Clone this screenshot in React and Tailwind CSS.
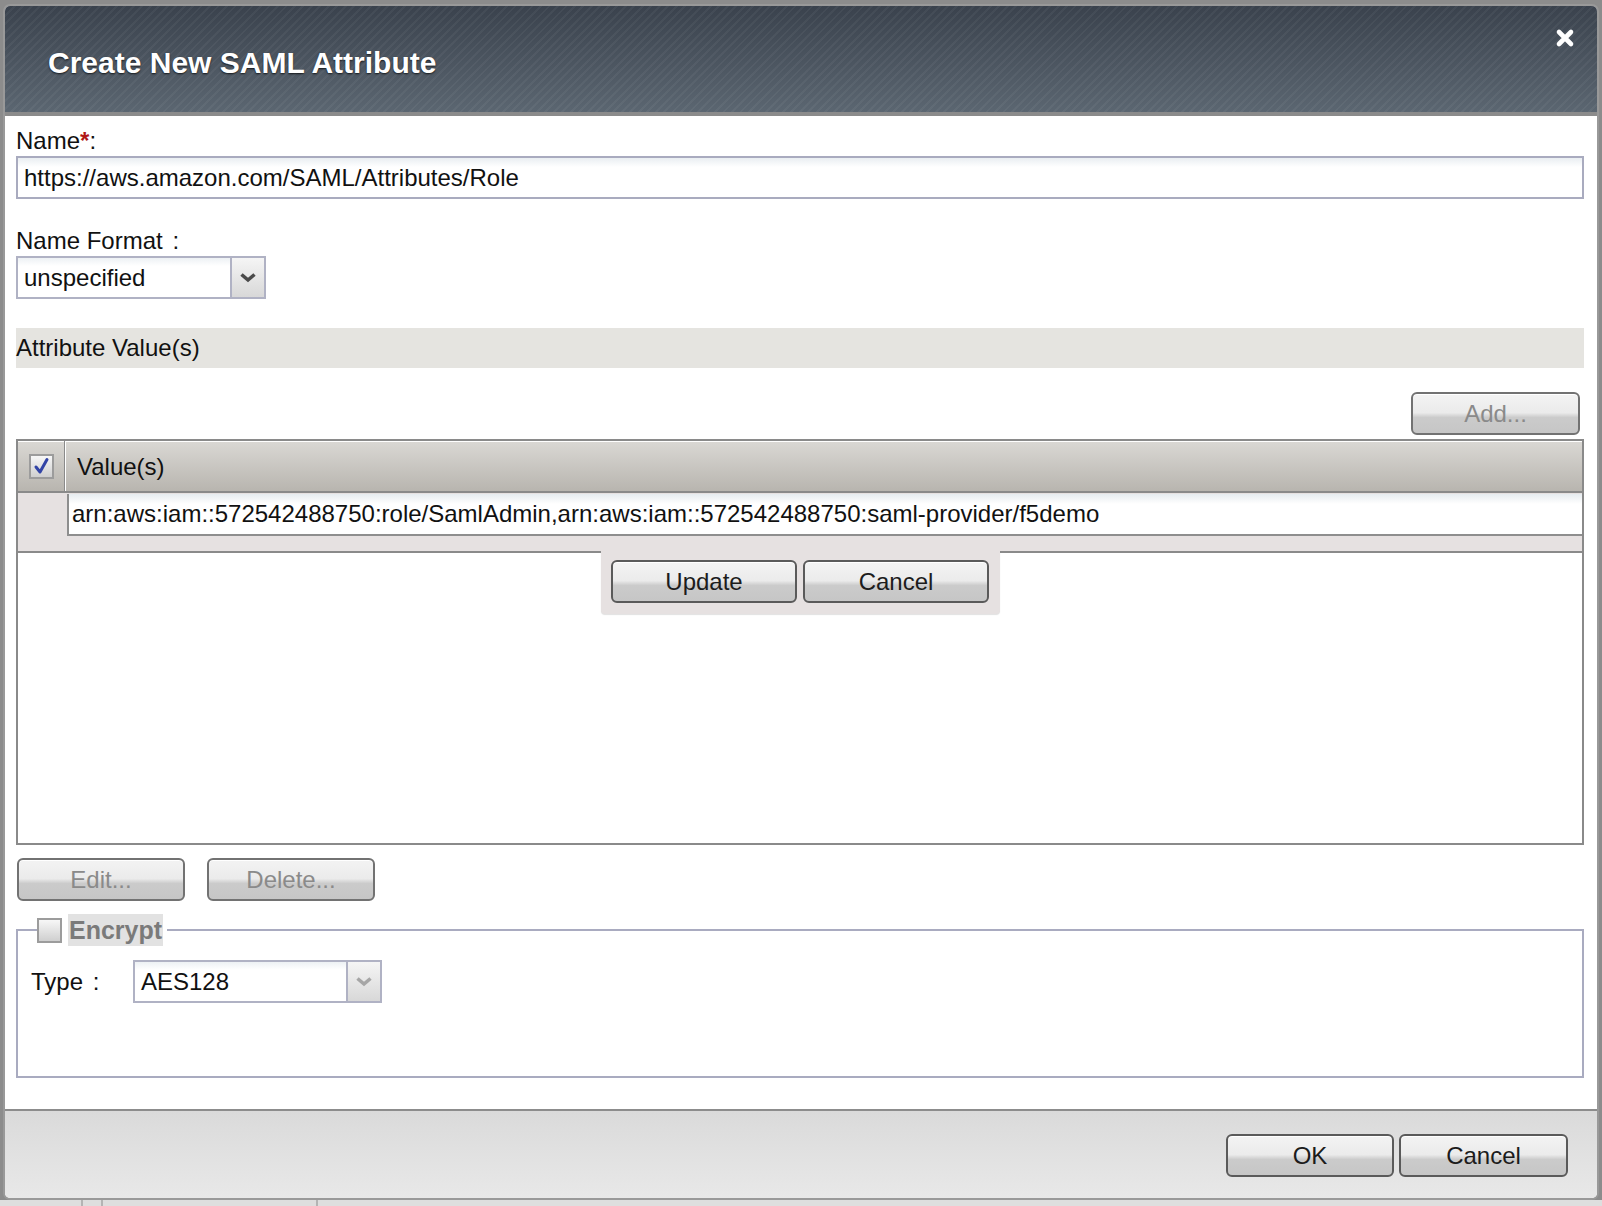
import clsx from "clsx";

const btnBase =
  "h-[43px] rounded-[6px] border-2 text-[24px] leading-none shadow-[inset_0_1px_0_#ffffff] bg-[linear-gradient(to_bottom,#f3f3f3_0%,#ebebeb_48%,#cbcbcb_60%,#c6c6c6_100%)]";

function Button({ children, disabled, className }) {
  return (
    <button
      type="button"
      className={clsx(
        btnBase,
        disabled ? "border-[#727272] text-[#8a8a8a]" : "border-[#5a5a5a] text-[#1c1c1c]",
        className
      )}
    >
      {children}
    </button>
  );
}

function Chevron({ color }) {
  return (
    <svg width="18" height="11" viewBox="0 0 18 11">
      <polyline points="2.5,2.5 9,8 15.5,2.5" fill="none" stroke={color} strokeWidth="3.6" strokeLinejoin="miter" />
    </svg>
  );
}

function Select({ value, muted, className }) {
  return (
    <div className={clsx("flex h-[43px] border-2 border-[#b0b2c4] bg-white", className)}>
      <div className="flex flex-1 items-center pl-[6px] text-[24px] text-[#111] bg-[linear-gradient(to_bottom,#edf1f4_0px,#ffffff_8px)]">
        {value}
      </div>
      <div className="flex w-[34px] items-center justify-center border-l-2 border-[#b0b2c4] bg-[linear-gradient(to_bottom,#f5f5f5,#d8d8d8)]">
        <Chevron color={muted ? "#a6a6a6" : "#4a4a4a"} />
      </div>
    </div>
  );
}

function CheckBox({ checked }) {
  return (
    <div className="flex h-[25px] w-[25px] items-center justify-center border-2 border-[#9c9c9c] bg-[linear-gradient(to_bottom,#f7f7f7,#cfcfcf)]">
      {checked && (
        <svg width="19" height="19" viewBox="0 0 19 19">
          <path d="M4 10 L8 15 L15 2.5" fill="none" stroke="#3244a6" strokeWidth="3" strokeLinecap="round" strokeLinejoin="round" />
        </svg>
      )}
    </div>
  );
}

export default function App() {
  return (
    <div className="relative h-[1206px] w-[1602px] overflow-hidden bg-[#8c8c8c] font-['Liberation_Sans',Arial,sans-serif]">
      <div className="ml-[3px] mt-[4px] flex h-[1196px] w-[1596px] flex-col overflow-hidden rounded-[7px] border-2 border-[#999999] bg-white">
        {/* title bar */}
        <div className="relative flex h-[110px] shrink-0 items-center border-b-4 border-[#8b8b8b] pl-[43px] pt-[6px] bg-[repeating-linear-gradient(135deg,rgba(255,255,255,0.045)_0px,rgba(255,255,255,0.045)_2px,transparent_2px,transparent_6px),linear-gradient(to_bottom,#3a424d,#5b6671)]">
          <h1 className="text-[30px] font-bold text-white [text-shadow:0_1px_2px_rgba(0,0,0,0.75)]">
            Create New SAML Attribute
          </h1>
          <button type="button" className="absolute right-[22px] top-[22px]">
            <svg width="20" height="20" viewBox="0 0 20 20">
              <path d="M4 4 L16 16 M16 4 L4 16" stroke="#ffffff" strokeWidth="4.6" strokeLinecap="round" />
            </svg>
          </button>
        </div>

        {/* form body */}
        <div className="flex flex-1 flex-col pl-[11px] pr-[13px] pt-[11px] text-[24px] text-[#111]">
          <label className="leading-[28px]">
            Name<span className="font-bold text-[#b01818]">*</span>:
          </label>
          <div className="mt-[1px] flex h-[43px] items-center border-2 border-[#a9abbf] pl-[6px] bg-[linear-gradient(to_bottom,#e9eef2_0px,#ffffff_9px)]">
            https://aws.amazon.com/SAML/Attributes/Role
          </div>

          <label className="mt-[28px] leading-[28px]">
            Name Format <span className="ml-[3px]">:</span>
          </label>
          <Select value="unspecified" className="mt-[1px] w-[250px]" />

          <div className="mt-[29px] h-[40px] bg-[#e5e4e0] leading-[40px]">Attribute Value(s)</div>

          <div className="mt-[24px] flex justify-end pr-[4px]">
            <Button disabled className="w-[169px]">
              Add...
            </Button>
          </div>

          {/* values table */}
          <div className="mt-[4px] flex h-[406px] flex-col border-2 border-[#8a8a8a]">
            <div className="flex h-[52px] shrink-0 border-b-2 border-[#8a8a8a] shadow-[inset_0_1px_0_#ffffff] bg-[linear-gradient(to_bottom,#dad8d4,#b8b5af)]">
              <div className="flex w-[47px] items-center justify-center border-r border-[#8a8a8a]">
                <CheckBox checked />
              </div>
              <div className="flex flex-1 items-center border-l border-white pl-[11px] pt-[2px]">Value(s)</div>
            </div>

            <div className="flex h-[58px] shrink-0 bg-[#e6e1e1]">
              <div className="w-[49px]" />
              <div className="flex-1 pt-[1px]">
                <div className="flex h-[42px] items-center border-b-2 border-l-2 border-[#8e8e8e] pl-[3px] bg-[linear-gradient(to_bottom,#e6ecf0_0px,#ffffff_10px)]">
                  arn:aws:iam::572542488750:role/SamlAdmin,arn:aws:iam::572542488750:saml-provider/f5demo
                </div>
              </div>
            </div>

            <div className="flex">
              <div className="h-[2px] flex-1 bg-[#8a8a8a]" />
              <div className="flex h-[63px] w-[399px] items-start justify-center gap-[6px] rounded-b-[4px] bg-[#e6e1e1] pt-[9px] shadow-[0_1px_1px_rgba(0,0,0,0.12)]">
                <Button className="w-[186px]">Update</Button>
                <Button className="w-[186px]">Cancel</Button>
              </div>
              <div className="h-[2px] flex-1 bg-[#8a8a8a]" />
            </div>
          </div>

          <div className="mt-[13px] flex gap-[22px] pl-[1px]">
            <Button disabled className="w-[168px]">
              Edit...
            </Button>
            <Button disabled className="w-[168px]">
              Delete...
            </Button>
          </div>

          {/* encryption group */}
          <div className="relative mt-[28px] h-[149px] border-2 border-[#a9abc0]">
            <div className="absolute left-[19px] top-[-17px] flex items-center gap-[6px] bg-white pr-[4px]">
              <CheckBox />
              <span className="bg-[#e2e2e2] px-[1px] text-[25px] font-bold leading-[32px] text-[#7a7a7a]">Encrypt</span>
            </div>
            <div className="mt-[29px] flex items-center pl-[13px]">
              <span className="w-[102px]">
                Type <span className="ml-[3px]">:</span>
              </span>
              <Select value="AES128" muted className="w-[249px]" />
            </div>
          </div>
        </div>

        {/* footer */}
        <div className="flex h-[89px] shrink-0 items-start justify-end gap-[5px] border-t-2 border-[#8c8c8c] pr-[29px] pt-[23px] bg-[linear-gradient(to_bottom,#dadada,#e8e8e8)]">
          <Button className="w-[168px]">OK</Button>
          <Button className="w-[169px]">Cancel</Button>
        </div>
      </div>

      {/* page beneath the dialog */}
      <div className="flex h-[30px] bg-[#dedede] text-[22px] text-[#9a9a9a]">
        <div className="w-[83px] border-r-2 border-[#b4b4b4]" />
        <div className="w-[20px] border-r-2 border-[#b4b4b4]" />
        <div className="w-[215px] border-r-2 border-[#b4b4b4] pl-[20px] pt-[3px]">Export Metadata</div>
      </div>
    </div>
  );
}
